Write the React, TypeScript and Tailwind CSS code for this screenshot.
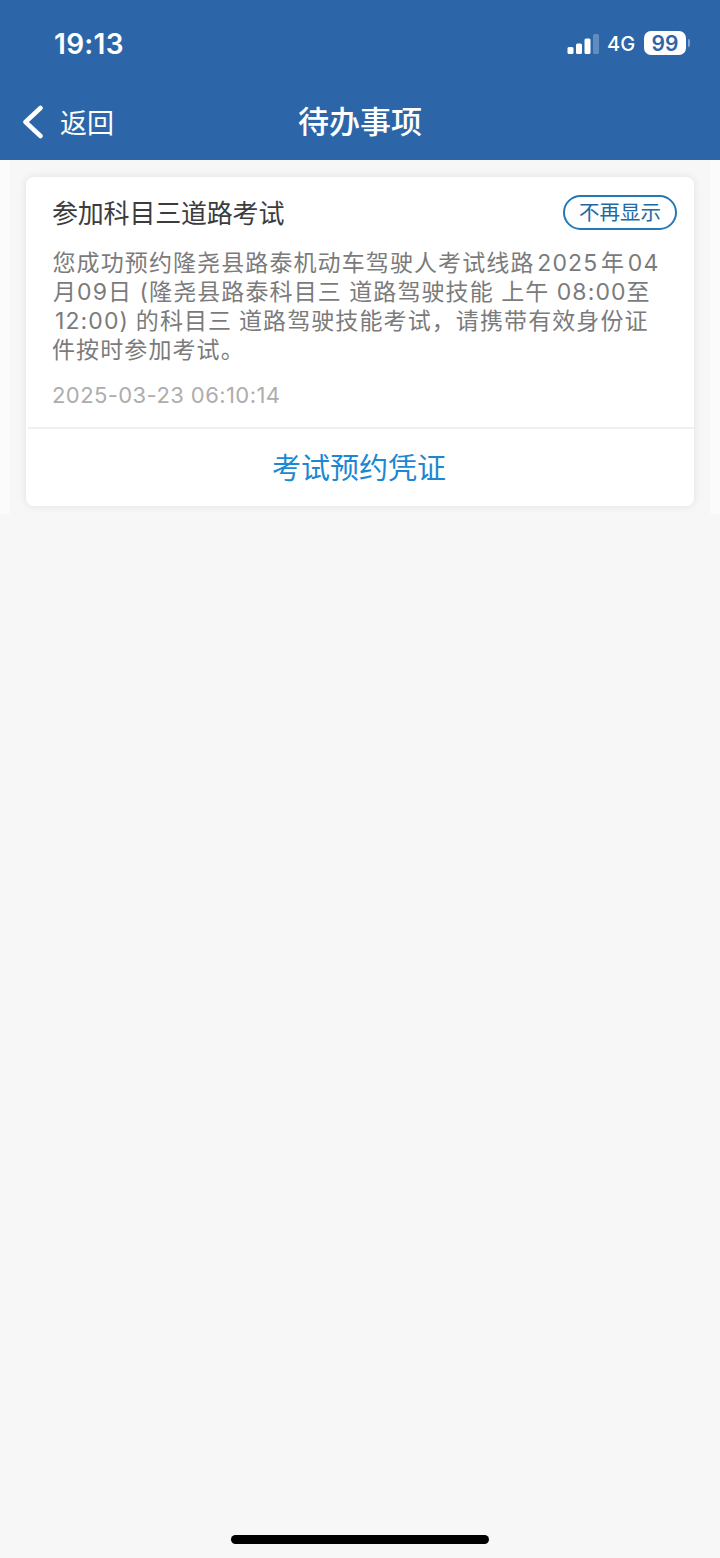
const messageLines = [
  { text: '您成功预约隆尧县路泰机动车驾驶人考试线路 2025 年 04', className: 'pl-[0.5px] tracking-[1.1px] [word-spacing:-4.8px]' },
  { text: '月09日 (隆尧县路泰科目三 道路驾驶技能 上午 08:00至', className: 'pl-[1px] tracking-[1.1px] [word-spacing:-0.2px]' },
  { text: '12:00) 的科目三 道路驾驶技能考试，请携带有效身份证', className: 'pl-[3px] tracking-[1.1px] [word-spacing:-0.8px]' },
  { text: '件按时参加考试。', className: 'tracking-[1.1px]' },
];

function StatusBar() {
  return (
    <div className="flex h-[86px] items-center justify-between pr-[30px] pl-[54px]">
      <span className="pt-[2px] text-[28px] leading-none font-semibold tracking-[0.3px]">19:13</span>
      <div className="flex items-center">
        <svg width="33" height="20" viewBox="0 0 33 20" fill="currentColor" className="mt-px">
          <rect x="0.5" y="13" width="6" height="7" rx="1.5" />
          <rect x="9" y="9.5" width="6" height="10.5" rx="1.5" />
          <rect x="17.5" y="4.5" width="6" height="15.5" rx="1.5" />
          <rect x="26" y="0" width="6" height="20" rx="1.5" opacity="0.25" />
        </svg>
        <span className="ml-[7px] w-[30px] pt-[2px] text-[20px] leading-none font-medium">4G</span>
        <span className="ml-[7px] flex h-6 w-[42px] items-center justify-center rounded-[7px] bg-white text-[21px] leading-none font-semibold text-[#2c66a9]">
          99
        </span>
        <span className="ml-[2px] h-2 w-[2px] rounded-r-full bg-white/40" />
      </div>
    </div>
  );
}

function NavBar() {
  return (
    <div className="grid h-[74px] grid-cols-3 items-center">
      <button className="flex items-center pb-[2px] pl-[22px]">
        <svg width="22" height="34" viewBox="0 0 22 34" fill="none" stroke="currentColor" strokeWidth="4.5" strokeLinecap="round" strokeLinejoin="round">
          <path d="M18.5 3 L3.5 17 L18.5 31" />
        </svg>
        <span className="ml-4 pt-[2px] text-[27px] leading-none">返回</span>
      </button>
      <h1 className="pb-1 text-center text-[31px] leading-none font-medium">待办事项</h1>
    </div>
  );
}

function TodoCard() {
  return (
    <section className="h-[329px] rounded-lg bg-white shadow-[0_0_10px_rgba(0,0,0,0.09)]">
      <div className="h-[250px] pt-[17px] pl-[26px]">
        <div className="flex h-9 items-center justify-between pr-[17px]">
          <h2 className="pt-[3px] text-[26px] leading-none tracking-[-0.2px] text-[#3c3c3c]">参加科目三道路考试</h2>
          <button className="h-[35px] w-[114px] rounded-full border-2 border-[#2479b5] pt-[3px] text-[20.5px] leading-none text-[#2069a5]">
            不再显示
          </button>
        </div>
        <div className="mt-[19px] text-[23px] leading-[29px] whitespace-nowrap text-[#7b7b7b]">
          {messageLines.map((line) => (
            <p key={line.text} className={line.className}>{line.text}</p>
          ))}
        </div>
        <time className="mt-[16px] block text-[22px] leading-[28px] tracking-[0.42px] text-[#adadad]">2025-03-23 06:10:14</time>
      </div>
      <button className="ml-[2px] flex h-[79px] w-[666px] items-center justify-center border-t-2 border-[#efefef] pt-[2px] pr-1 text-[29px] leading-none text-[#1c87d3]">
        考试预约凭证
      </button>
    </section>
  );
}

export default function App() {
  return (
    <div className="flex h-[1558px] w-[720px] flex-col bg-[#f7f7f7] font-[Inter,'Noto_Sans_CJK_SC',sans-serif]">
      <header className="h-40 bg-[#2c66a9] text-white">
        <StatusBar />
        <NavBar />
      </header>
      <main className="flex-1">
        <div className="h-[354px] bg-[#fbfbfb] px-[10px]">
          <div className="h-full bg-[#f7f7f7] px-4 pt-[17px]">
            <TodoCard />
          </div>
        </div>
      </main>
      <div className="mx-auto mb-[14px] h-[9px] w-[258px] rounded-full bg-black" />
    </div>
  );
}
